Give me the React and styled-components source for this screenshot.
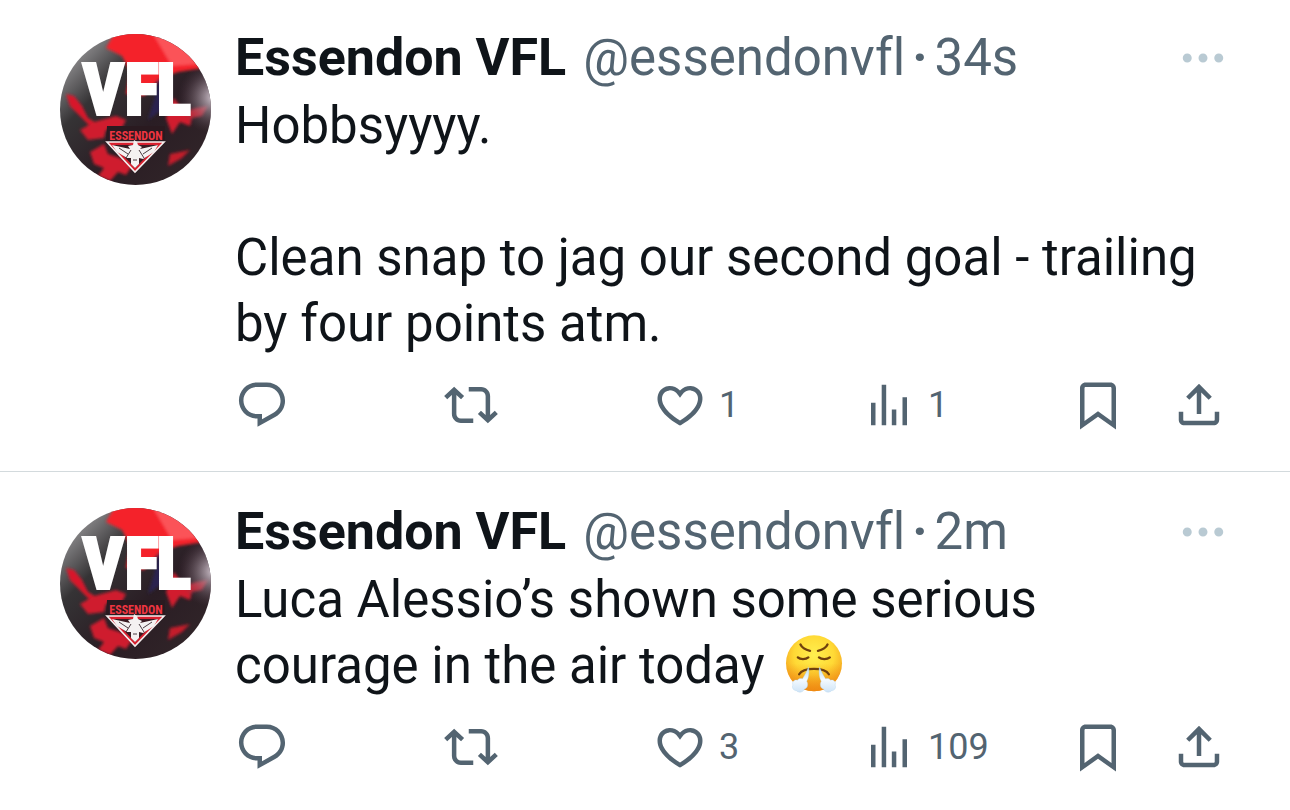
import React, { useState } from "react";
import styled, { createGlobalStyle } from "styled-components";

const GlobalStyle = createGlobalStyle`
    * {
        box-sizing: border-box;
    }

    body {
        margin: 0;
        background-color: #ffffff;
        font-family: Roboto, "Liberation Sans", sans-serif;
        font-variant-ligatures: none;
        color: #0f1419;
    }
`;

const Feed = styled.main`
    width: 100%;
`;

const Tweet = styled.article`
    display: flex;
    gap: 24px;
    padding: 36px 64px 39px 60px;
    border-bottom: 1px solid #d3dadd;

    &:first-child {
        padding-top: 34px;
    }

    &:last-child {
        border-bottom: none;
        padding-bottom: 24px;
    }
`;

const AvatarLink = styled.a`
    flex: none;
    width: 151px;
    height: 151px;
    border-radius: 50%;
    overflow: hidden;

    svg {
        display: block;
    }
`;

const Body = styled.div`
    flex: 1;
    min-width: 0;
`;

const Header = styled.header`
    display: flex;
    align-items: center;
    height: 48px;
    margin-bottom: 11px;
    font-size: 51px;
    line-height: 48px;
    white-space: nowrap;
`;

const Name = styled.a`
    font-size: 52px;
    font-weight: 700;
    color: #0f1419;
    text-decoration: none;
    margin-right: 17px;
`;

const Meta = styled.a`
    color: #536471;
    text-decoration: none;
`;

const Dot = styled.span`
    color: #536471;
    font-weight: 700;
    padding: 0 7px;
`;

const IconButton = styled.button`
    display: flex;
    align-items: center;
    gap: 12px;
    padding: 0;
    border: none;
    background-color: transparent;
    color: ${(props) => props.$color || "#536471"};
    font-family: inherit;
    font-size: 36px;
    line-height: 54px;
    cursor: pointer;
`;

const MoreButton = styled(IconButton)`
    margin: 0 -4px 0 auto;
`;

const Icon = styled.svg`
    display: block;
    flex: none;
    width: 54px;
    height: 54px;
    fill: currentColor;
`;

const Text = styled.p`
    margin: 0 0 21px;
    font-size: 51px;
    line-height: 66px;
    white-space: pre-line;
`;

const Emoji = styled.svg`
    width: 58px;
    height: 58px;
    margin-left: 8px;
    vertical-align: -10px;
`;

const Actions = styled.div`
    display: flex;
    align-items: center;
`;

const Action = styled.div`
    flex: 1;
`;

const EndActions = styled.div`
    display: flex;
    gap: 47px;
`;

const icons = {
    reply: "M1.751 10c0-4.42 3.584-8 8.005-8h4.366c4.49 0 8.129 3.64 8.129 8.13 0 2.96-1.607 5.68-4.196 7.11l-8.054 4.46v-3.69h-.067c-4.49.1-8.183-3.51-8.183-8.01zm8.005-6c-3.317 0-6.005 2.69-6.005 6 0 3.37 2.77 6.08 6.138 6.01l.351-.01h1.761v2.3l5.087-2.81c1.951-1.08 3.163-3.13 3.163-5.36 0-3.39-2.744-6.13-6.129-6.13H9.756z",
    repost: "M4.5 3.88l4.432 4.14-1.364 1.46L5.5 7.55V16c0 1.1.896 2 2 2H13v2H7.5c-2.209 0-4-1.79-4-4V7.55L1.432 9.48.068 8.02 4.5 3.88zM16.5 6H11V4h5.5c2.209 0 4 1.79 4 4v8.45l2.068-1.93 1.364 1.46-4.432 4.14-4.432-4.14 1.364-1.46 2.068 1.93V8c0-1.1-.896-2-2-2z",
    like: "M16.697 5.5c-1.222-.06-2.679.51-3.89 2.16l-.805 1.09-.806-1.09C9.984 6.01 8.526 5.44 7.304 5.5c-1.243.07-2.349.78-2.91 1.91-.552 1.12-.633 2.78.479 4.82 1.074 1.97 3.257 4.27 7.129 6.61 3.87-2.34 6.052-4.64 7.126-6.61 1.111-2.04 1.03-3.7.477-4.82-.561-1.13-1.666-1.84-2.908-1.91zm4.187 7.69c-1.351 2.48-4.001 5.12-8.379 7.67l-.503.3-.504-.3c-4.379-2.55-7.029-5.19-8.382-7.67-1.36-2.5-1.41-4.86-.514-6.67.887-1.79 2.647-2.91 4.601-3.01 1.651-.09 3.368.56 4.798 2.01 1.429-1.45 3.146-2.1 4.796-2.01 1.954.1 3.714 1.22 4.601 3.01.896 1.81.846 4.17-.514 6.67z",
    views: "M8.75 21V3h2v18h-2zM18 21V8.5h2V21h-2zM4 21l.004-10h2L6 21H4zm9.248 0v-7h2v7h-2z",
    bookmark: "M4 4.5C4 3.12 5.119 2 6.5 2h11C18.881 2 20 3.12 20 4.5v18.44l-8-5.71-8 5.71V4.5zM6.5 4c-.276 0-.5.22-.5.5v14.56l6-4.29 6 4.29V4.5c0-.28-.224-.5-.5-.5h-11z",
    share: "M12 2.59l5.7 5.7-1.41 1.42L13 6.41V16h-2V6.41l-3.3 3.3-1.41-1.42L12 2.59zM21 15l-.02 3.51c0 1.38-1.12 2.49-2.5 2.49H5.5C4.11 21 3 19.88 3 18.5V15h2v3.5c0 .28.22.5.5.5h12.98c.28 0 .5-.22.5-.5L19 15h2z",
    more: "M3 12c0-1.1.9-2 2-2s2 .9 2 2-.9 2-2 2-2-.9-2-2zm9 2c1.1 0 2-.9 2-2s-.9-2-2-2-2 .9-2 2 .9 2 2 2zm7 0c1.1 0 2-.9 2-2s-.9-2-2-2-2 .9-2 2 .9 2 2 2z",
};

const tweets = [
    {
        id: 1,
        time: "34s",
        text: "Hobbsyyyy.\n\nClean snap to jag our second goal - trailing by four points atm.",
        likes: 1,
        views: 1,
    },
    {
        id: 2,
        time: "2m",
        text: "Luca Alessio’s shown some serious courage in the air today ",
        emoji: true,
        likes: 3,
        views: 109,
    },
];

const Glyph = ({ name }) => (
    <Icon viewBox="0 0 24 24" aria-hidden="true">
        <path d={icons[name]} />
    </Icon>
);

const Avatar = ({ id }) => (
    <svg width="151" height="151" viewBox="0 0 151 151" aria-hidden="true">
        <defs>
            <linearGradient id={`base${id}`} x1="0" y1="0" x2="1" y2="1">
                <stop offset="0.12" stopColor="#8b8a8c" />
                <stop offset="0.32" stopColor="#353335" />
                <stop offset="0.6" stopColor="#2a1d24" />
                <stop offset="1" stopColor="#33272a" />
            </linearGradient>
            <radialGradient id={`shine${id}`} cx="1.02" cy="0.42" r="0.24">
                <stop offset="0" stopColor="#d8ccd6" />
                <stop offset="1" stopColor="#5a4450" stopOpacity="0" />
            </radialGradient>
            <filter id={`soft${id}`} x="-20%" y="-20%" width="140%" height="140%">
                <feGaussianBlur stdDeviation="1.4" />
            </filter>
        </defs>
        <rect width="151" height="151" fill={`url(#base${id})`} />
        <g filter={`url(#soft${id})`}>
            <path d="M56 -4H128L144 34L118 38L100 44L84 62L66 60L70 38L62 22L46 14Z" fill="#f4202c" />
            <path d="M92 -2L118 6L138 30L112 32Z" fill="#fb5259" />
            <path d="M6 60L14 62L22 72L28 84L38 90L32 94L20 82L10 72Z" fill="#d8192b" />
            <path d="M20 96L34 88L56 82L66 86L62 94L46 96L44 104L28 106Z" fill="#cf1b2d" />
            <path d="M30 118L44 110L48 120L60 124L72 132L66 141L58 138L50 147L38 142L44 134L34 130Z" fill="#cf1b2d" />
            <path d="M114 64L124 78L136 74L148 72L142 82L132 84L130 92L120 88L112 100L106 84Z" fill="#d11c2e" />
            <path d="M110 120L130 116L122 124L108 132Z" fill="#c41c2c" />
            <path d="M98 46L108 42L104 74L88 86L94 66Z" fill="#2b2450" />
        </g>
        <rect width="151" height="151" fill={`url(#shine${id})`} />
        <text
            x="23 65 97"
            y="80"
            fill="#ffffff"
            stroke="#ffffff"
            strokeWidth="4"
            fontFamily="'Liberation Sans Narrow', 'Roboto Condensed', Roboto, sans-serif"
            fontWeight="700"
            fontSize="70"
        >
            VFL
        </text>
        <path d="M47 92H105V107L75 139L46 107Z" fill="#2a1a20" />
        <text
            x="76"
            y="106"
            textAnchor="middle"
            fill="#ee3540"
            fontFamily="'Liberation Sans Narrow', 'Roboto Condensed', Roboto, sans-serif"
            fontWeight="700"
            fontSize="12"
        >
            ESSENDON
        </text>
        <path d="M47 108H104L75 138Z" fill="#d8202f" stroke="#f6eeee" strokeWidth="1.6" />
        <path d="M53 111H98L75 134Z" fill="#3a1b22" />
        <path
            d="M74 106L77 108L78 111L82 113L80 115L98 111L94 118L83 125L79 124V130L75 134L71 130V124L67 124L57 118L52 111L70 115L68 112L73 111Z"
            fill="#f4f1f1"
        />
        <path d="M71 116L66 124M79 116L84 124M73 126H77M59 114L68 120M92 114L83 120" stroke="#4a3b40" fill="none" />
    </svg>
);

const HuffEmoji = () => (
    <Emoji viewBox="45 28 174 176" role="img" aria-label="Face with steam from nose">
        <defs>
            <radialGradient id="face" cx="0.5" cy="0.35" r="0.65">
                <stop offset="0" stopColor="#fff04f" />
                <stop offset="0.55" stopColor="#ffd935" />
                <stop offset="1" stopColor="#f2981a" />
            </radialGradient>
            <linearGradient id="chin" x1="0" y1="0" x2="0" y2="1">
                <stop offset="0.5" stopColor="#f08a10" stopOpacity="0" />
                <stop offset="1" stopColor="#ee8510" stopOpacity="0.8" />
            </linearGradient>
            <linearGradient id="steam" x1="0" y1="0" x2="0" y2="1">
                <stop offset="0" stopColor="#b9dcf2" />
                <stop offset="0.5" stopColor="#f4faff" />
                <stop offset="1" stopColor="#cfe4f7" />
            </linearGradient>
        </defs>
        <circle cx="132" cy="114" r="85" fill="url(#face)" />
        <circle cx="132" cy="114" r="85" fill="url(#chin)" />
        <g fill="none" stroke="#70400d" strokeWidth="7" strokeLinecap="round">
            <path d="M91 57C96 68 106 73 120 76" />
            <path d="M173 57C168 68 158 73 144 76" />
            <path d="M83 96C90 103 107 103 115 96" />
            <path d="M147 96C155 103 172 103 180 96" />
            <path d="M87 147C94 135 112 131 132 131C152 131 170 135 177 147" />
        </g>
        <g fill="url(#steam)" stroke="#a9cde9" strokeWidth="1">
            <path d="M115 125C119 142 115 160 110 168C116 178 112 190 103 192C99 203 84 204 79 197C69 197 64 187 68 180C64 170 72 162 82 165C84 160 92 159 97 161C103 150 110 140 115 125Z" />
            <path d="M149 125C145 142 149 160 154 168C148 178 152 190 161 192C165 203 180 204 185 197C195 197 200 187 196 180C200 170 192 162 182 165C180 160 172 159 167 161C161 150 154 140 149 125Z" />
        </g>
    </Emoji>
);

const TweetItem = ({ item }) => {
    const [liked, setLiked] = useState(false);

    return (
        <Tweet>
            <AvatarLink href="#" aria-label="Essendon VFL">
                <Avatar id={item.id} />
            </AvatarLink>
            <Body>
                <Header>
                    <Name href="#">Essendon VFL</Name>
                    <Meta href="#">@essendonvfl</Meta>
                    <Dot>·</Dot>
                    <Meta href="#">{item.time}</Meta>
                    <MoreButton $color="#b9cad3" aria-label="More">
                        <Glyph name="more" />
                    </MoreButton>
                </Header>
                <Text>
                    {item.text}
                    {item.emoji && <HuffEmoji />}
                </Text>
                <Actions>
                    <Action>
                        <IconButton aria-label="Reply">
                            <Glyph name="reply" />
                        </IconButton>
                    </Action>
                    <Action>
                        <IconButton aria-label="Repost">
                            <Glyph name="repost" />
                        </IconButton>
                    </Action>
                    <Action>
                        <IconButton
                            aria-label="Like"
                            $color={liked ? "#f91880" : undefined}
                            onClick={() => setLiked(!liked)}
                        >
                            <Glyph name="like" />
                            {item.likes + (liked ? 1 : 0)}
                        </IconButton>
                    </Action>
                    <Action>
                        <IconButton aria-label="Views">
                            <Glyph name="views" />
                            {item.views}
                        </IconButton>
                    </Action>
                    <EndActions>
                        <IconButton aria-label="Bookmark">
                            <Glyph name="bookmark" />
                        </IconButton>
                        <IconButton aria-label="Share">
                            <Glyph name="share" />
                        </IconButton>
                    </EndActions>
                </Actions>
            </Body>
        </Tweet>
    );
};

const App = () => {
    return (
        <>
            <GlobalStyle />
            <Feed>
                {tweets.map((item) => (
                    <TweetItem item={item} key={item.id} />
                ))}
            </Feed>
        </>
    );
};

export default App;
